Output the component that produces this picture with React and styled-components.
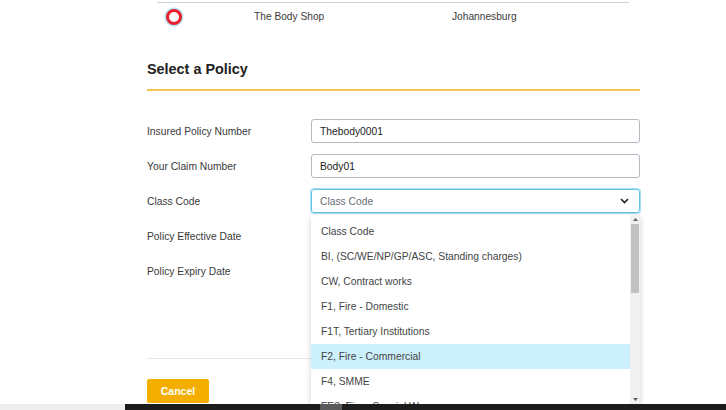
import styled, { createGlobalStyle } from "styled-components"

const GlobalStyle = createGlobalStyle`
  html, body {
    margin: 0;
    padding: 0;
    background: #ffffff;
    font-family: "Liberation Sans", Arial, sans-serif;
  }
`

const Screen = styled.div`
  width: 726px;
  height: 410px;
  display: flex;
  flex-direction: column;
  overflow: hidden;
`

const Page = styled.div`
  flex: 1;
  overflow: hidden;
  padding: 0 86px 0 147px;
`

const Row = styled.div`
  margin: 2px 11px 0 10px;
  border-top: 1px solid #c9d1dd;
  height: 27px;
  display: flex;
  align-items: center;
  font-size: 10.2px;
  color: #3a3a3a;
`

const Radio = styled.span`
  width: 10px;
  height: 10px;
  margin-left: 9px;
  border-radius: 50%;
  border: 3px solid #e8212e;
  background: #fff;
  box-shadow: 0 0 0 1.5px #b6e3f6;
  flex-shrink: 0;
`

const Cell = styled.span`
  width: ${(p) => p.w}px;
  flex-shrink: 0;
`

const Title = styled.h2`
  margin: 31px 0 0;
  font-size: 14.4px;
  font-weight: bold;
  color: #222;
  padding-bottom: 12px;
  border-bottom: 2px solid #f5c34e;
`

const Form = styled.div`
  margin-top: 28px;
  display: flex;
  flex-direction: column;
  gap: 11px;
`

const Field = styled.div`
  display: flex;
  align-items: center;
  height: 24px;
`

const Label = styled.label`
  width: 164px;
  font-size: 10.3px;
  color: #3a3a3a;
`

const Input = styled.div`
  position: relative;
  flex: 1;
  height: 24px;
  box-sizing: border-box;
  border: 1px solid ${(p) => (p.focus ? "#66c3e8" : "#b3bac4")};
  box-shadow: ${(p) => (p.focus ? "0 0 0 1px #a9def3" : "none")};
  border-radius: 3px;
  padding: 0 8px;
  display: flex;
  align-items: center;
  font-size: 10.3px;
  color: ${(p) => (p.placeholder ? "#6a6f78" : "#222")};
`

const Chevron = styled.svg`
  position: absolute;
  right: 10px;
  top: 8px;
`

const Menu = styled.div`
  position: absolute;
  left: -1px;
  right: -1px;
  top: 25px;
  height: 189px;
  background: #fff;
  box-shadow: 0 2px 6px rgba(0, 0, 0, 0.18);
  display: flex;
  z-index: 5;
`

const Options = styled.div`
  flex: 1;
  padding-top: 4px;
  overflow: hidden;
`

const Option = styled.div`
  height: 25px;
  display: flex;
  align-items: center;
  padding-left: 10px;
  font-size: 10.3px;
  color: #444;
  background: ${(p) => (p.active ? "#ccf0fc" : "transparent")};
`

const Scrollbar = styled.div`
  width: 10px;
  background: #f1f1f1;
  display: flex;
  flex-direction: column;
  align-items: center;
`

const Arrow = styled.svg`
  margin: 3px 0;
  flex-shrink: 0;
`

const Thumb = styled.div`
  width: 8px;
  height: 69px;
  background: #c1c1c1;
`

const Track = styled.div`
  flex: 1;
`

const Separator = styled.div`
  margin-top: 75px;
  border-top: 1px solid #e6e6e6;
`

const Footer = styled.div`
  padding-top: 20px;
`

const CancelButton = styled.button`
  width: 62px;
  height: 24px;
  border: none;
  border-radius: 2px;
  background: #f3ae00;
  color: #fff;
  font-family: "Liberation Sans", Arial, sans-serif;
  font-size: 10.5px;
  font-weight: bold;
`

const Taskbar = styled.div`
  height: 6px;
  display: flex;
  flex-shrink: 0;
`

const TaskbarEdge = styled.div`
  width: 125px;
  background: #efefef;
`

const TaskbarMain = styled.div`
  flex: 1;
  background: #1c1c1c;
  display: flex;
  padding-left: 195px;
`

const TaskItem = styled.div`
  width: 22px;
  background: #5a5a5a;
`

const options = [
  "Class Code",
  "BI, (SC/WE/NP/GP/ASC, Standing charges)",
  "CW, Contract works",
  "F1, Fire - Domestic",
  "F1T, Tertiary Institutions",
  "F2, Fire - Commercial",
  "F4, SMME",
  "FE3, Fire - Special Wo",
]

const App = () => {
  return (
    <Screen>
      <GlobalStyle />
      <Page>
        <Row>
          <Radio />
          <Cell w={72} />
          <Cell w={198}>The Body Shop</Cell>
          <Cell w={120}>Johannesburg</Cell>
        </Row>
        <Title>Select a Policy</Title>
        <Form>
          <Field>
            <Label>Insured Policy Number</Label>
            <Input>Thebody0001</Input>
          </Field>
          <Field>
            <Label>Your Claim Number</Label>
            <Input>Body01</Input>
          </Field>
          <Field>
            <Label>Class Code</Label>
            <Input focus placeholder>
              Class Code
              <Chevron width="9" height="6" viewBox="0 0 9 6">
                <path d="M1 1 L4.5 4.5 L8 1" fill="none" stroke="#222" strokeWidth="1.6" />
              </Chevron>
              <Menu>
                <Options>
                  {options.map((o) => (
                    <Option key={o} active={o === "F2, Fire - Commercial"}>
                      {o}
                    </Option>
                  ))}
                </Options>
                <Scrollbar>
                  <Arrow width="5" height="3" viewBox="0 0 5 3">
                    <path d="M0 3 L2.5 0 L5 3 Z" fill="#606060" />
                  </Arrow>
                  <Thumb />
                  <Track />
                  <Arrow width="5" height="3" viewBox="0 0 5 3">
                    <path d="M0 0 L2.5 3 L5 0 Z" fill="#606060" />
                  </Arrow>
                </Scrollbar>
              </Menu>
            </Input>
          </Field>
          <Field>
            <Label>Policy Effective Date</Label>
          </Field>
          <Field>
            <Label>Policy Expiry Date</Label>
          </Field>
        </Form>
        <Separator />
        <Footer>
          <CancelButton>Cancel</CancelButton>
        </Footer>
      </Page>
      <Taskbar>
        <TaskbarEdge />
        <TaskbarMain>
          <TaskItem />
        </TaskbarMain>
      </Taskbar>
    </Screen>
  )
}

export default App
